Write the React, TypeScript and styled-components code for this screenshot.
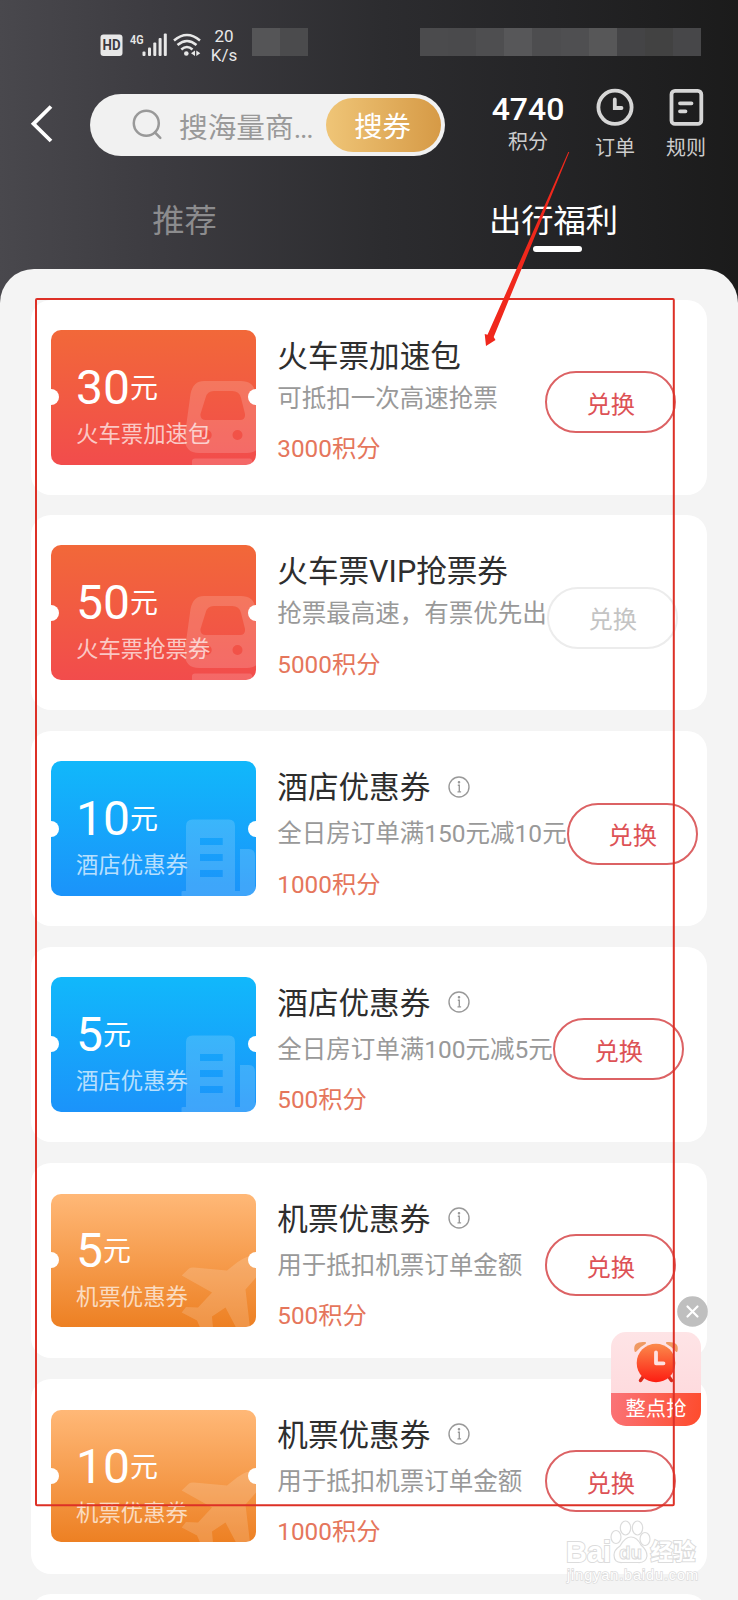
import React from 'react';
import styled, { createGlobalStyle } from 'styled-components';

const GlobalStyle = createGlobalStyle`
  * { box-sizing: border-box; }
  body {
    margin: 0;
    font-family: Roboto, "Noto Sans CJK SC", sans-serif;
    color: #2e2e2e;
  }
`;

const Screen = styled.div`
  position: relative;
  width: 738px;
  height: 1600px;
  overflow: hidden;
  display: flex;
  flex-direction: column;
  background: linear-gradient(90deg, #49484d 0%, #3c3b40 22%, #2c2c2f 52%, #242426 75%, #1b1b1b 100%);
`;

/* ---------- status bar ---------- */

const StatusBar = styled.div`
  flex: none;
  display: flex;
  align-items: flex-start;
  height: 84px;
  padding: 28px 37px 0 100px;
`;

const StatusIcons = styled.svg`
  flex: none;
  display: block;
`;

const NetSpeed = styled.div`
  width: 38px;
  margin: -1px 0 0 1px;
  text-align: center;
  font-size: 17px;
  line-height: 19px;
  color: #e8e8e8;
`;

const Mosaic = styled.div<{ $push?: boolean }>`
  display: flex;
  height: 28px;
  margin-left: ${(p) => (p.$push ? 'auto' : '9px')};
`;

const MosaicBlock = styled.span<{ $tone: string }>`
  width: 28.1px;
  height: 28px;
  background: ${(p) => p.$tone};
`;

/* ---------- header ---------- */

const Header = styled.header`
  flex: none;
  display: flex;
  align-items: flex-start;
  height: 104px;
  padding: 4px 26px 0 29px;
`;

const BackIcon = styled.svg`
  flex: none;
  display: block;
  margin-top: 16px;
`;

const SearchBox = styled.div`
  flex: none;
  display: flex;
  align-items: center;
  width: 355px;
  height: 62px;
  margin: 6px 0 0 37px;
  padding: 0 4px 0 40px;
  border-radius: 31px;
  background: #f1f1f1;
`;

const Placeholder = styled.span`
  flex: 1;
  padding: 5px 0 0 15px;
  font-size: 28.7px;
  line-height: 40px;
  white-space: nowrap;
  color: #999;
`;

const Ellipsis = styled.span`
  letter-spacing: -1.3px;
`;

const SearchButton = styled.button`
  width: 115px;
  height: 54px;
  padding: 6px 2px 0 0;
  border: 0;
  border-radius: 27px;
  background: linear-gradient(90deg, #efc577, #d69a46);
  color: #fff;
  font: 400 28.3px/40px Roboto, "Noto Sans CJK SC", sans-serif;
`;

const HeaderItem = styled.div<{ $width: number; $gap: number }>`
  flex: none;
  display: flex;
  flex-direction: column;
  align-items: center;
  width: ${(p) => p.$width}px;
  margin-left: ${(p) => p.$gap}px;
`;

const PointsValue = styled.strong`
  height: 40px;
  padding-top: 4px;
  font-size: 32px;
  line-height: 34px;
  font-weight: 500;
  color: #fff;
`;

const HeaderLabel = styled.span`
  font-size: 20px;
  line-height: 28px;
  color: #cdcdcd;
`;

const HeaderIcon = styled.svg`
  display: block;
  margin-bottom: 6px;
`;

/* ---------- tabs ---------- */

const Tabs = styled.nav`
  flex: none;
  display: flex;
  height: 81px;
`;

const Tab = styled.div<{ $active?: boolean }>`
  flex: 1;
  display: flex;
  flex-direction: column;
  align-items: center;
  padding-top: 9px;
  font-size: 32.3px;
  line-height: 48px;
  color: ${(p) => (p.$active ? '#fff' : '#8c8c8e')};
`;

const TabMark = styled.span`
  width: 49px;
  height: 6px;
  margin: 1px 0 0 8px;
  border-radius: 3px;
  background: #fff;
`;

/* ---------- list ---------- */

const Panel = styled.main`
  flex: 1;
  min-height: 0;
  overflow: hidden;
  display: flex;
  flex-direction: column;
  gap: 20.8px;
  padding: 30.6px 31px 0;
  border-radius: 34px 34px 0 0;
  background: #f4f4f4;
`;

const Card = styled.section`
  flex: none;
  display: flex;
  height: 195px;
  padding-left: 20px;
  border-radius: 20px;
  background: #fff;
`;

const Ticket = styled.div<{ $from: string; $to: string; $height: number }>`
  position: relative;
  flex: none;
  align-self: center;
  width: 205px;
  height: ${(p) => p.$height}px;
  padding: ${(p) => (p.$height - 135) / 2 + 30}px 0 0 25px;
  border-radius: 10px;
  overflow: hidden;
  background: linear-gradient(180deg, ${(p) => p.$from}, ${(p) => p.$to});
  color: #fff;

  &::before,
  &::after {
    content: '';
    position: absolute;
    top: 50%;
    width: 16px;
    height: 16px;
    margin-top: -8px;
    border-radius: 50%;
    background: #fff;
  }
  &::before { left: -8px; }
  &::after { right: -8px; }
`;

const TicketArt = styled.svg`
  position: absolute;
  left: 0;
  bottom: 0;
`;

const Amount = styled.div`
  position: relative;
  display: flex;
  height: 56px;
  font-size: 48px;
  line-height: 56px;
`;

const Unit = styled.span`
  font-size: 28px;
  line-height: 57px;
`;

const TicketLabel = styled.div`
  position: relative;
  margin-top: 3px;
  font-size: 22.4px;
  line-height: 30px;
  color: rgba(255, 255, 255, 0.7);
`;

const Info = styled.div`
  flex: none;
  min-width: 267.5px;
  margin-left: 21.3px;
  padding-top: 38px;
  white-space: nowrap;
`;

const TitleRow = styled.div<{ $tall: boolean }>`
  display: flex;
  align-items: center;
  height: ${(p) => (p.$tall ? 48 : 44)}px;
  padding-bottom: ${(p) => (p.$tall ? 10 : 6)}px;
  font-size: 30.6px;
  line-height: 38px;
  color: #2e2e2e;
`;

const InfoIcon = styled.svg`
  display: block;
  margin: 0 0 3px 18px;
`;

const Description = styled.div`
  font-size: 24.5px;
  line-height: 34px;
  color: #999;
`;

const Cost = styled.div`
  margin-top: 16.500px;
  font-size: 24.3px;
  line-height: 34px;
  color: #e5765c;
`;

const ExchangeButton = styled.button<{ $disabled?: boolean }>`
  flex: none;
  width: 131px;
  height: 62px;
  margin: 71.5px 0 0 0.5px;
  padding: 5px 0 0;
  border: 2px solid ${(p) => (p.$disabled ? '#ececec' : '#dc6264')};
  border-radius: 31px;
  background: transparent;
  color: ${(p) => (p.$disabled ? '#c4c4c4' : '#dd5256')};
  font: 400 24.3px/34px Roboto, "Noto Sans CJK SC", sans-serif;
`;

/* ---------- floating promo ---------- */

const Promo = styled.aside`
  position: absolute;
  left: 611px;
  top: 1296px;
  width: 96.5px;
  display: flex;
  flex-direction: column;
`;

const PromoClose = styled.svg`
  align-self: flex-end;
  display: block;
`;

const PromoCard = styled.div`
  display: flex;
  flex-direction: column;
  width: 90px;
  height: 94px;
  margin-top: 4.5px;
  border-radius: 15px;
  overflow: hidden;
  background: linear-gradient(180deg, #fee4e6, #fed6da);
`;

const PromoClock = styled.svg`
  flex: 1;
  min-height: 0;
  display: block;
`;

const PromoLabel = styled.div`
  height: 33px;
  padding-top: 1px;
  background: linear-gradient(100deg, #fa7478, #fe4b2c);
  color: #fff;
  font-size: 20.3px;
  line-height: 31px;
  text-align: center;
`;

/* ---------- overlays ---------- */

const Annotation = styled.svg`
  position: absolute;
  left: 0;
  top: 0;
  pointer-events: none;
`;

const Watermark = styled.svg`
  position: absolute;
  left: 560px;
  top: 1514px;
`;

const TrainArt = () => (
  <>
    <path
      fillRule="evenodd"
      d="M153 51 H190 Q202 51 204.500 62 L210 104 Q211 123 196 123 H148 Q132 123 134 104 L139.500 64 Q142 51 153 51Z
         M163 61 Q156 61 154.500 68 L149.500 84 Q149 90 155 90 H189 Q194.500 90 194 84 L190 68 Q188.500 61 181 61Z
         M150.700 105 a5 5 0 1 0 10 0 a5 5 0 1 0 -10 0Z
         M181.500 105 a5 5 0 1 0 10 0 a5 5 0 1 0 -10 0Z"
    />
    <path d="M141 135 V131 Q141 128.500 144 128.500 H199 Q201.500 128.500 202 135Z" />
  </>
);

const HotelArt = () => (
  <path
    fillRule="evenodd"
    d="M130.500 135 V131 Q130.500 130 132 130 H135 V65 Q135 58.500 141.500 58.500 H178 Q184 58.500 184 65 V130 H189 V88 H198 Q204 88 204 95 V130 H205 V135Z
       M149 77 H171.700 V84 H149Z M149 93 H171.700 V100 H149Z M149 109 H171.700 V116 H149Z"
  />
);

const PlaneArt = () => (
  <path
    transform="translate(0 2.500)"
    d="M130.700 81 L138 74 Q140 72.500 143 73 L176 76 L186 68 Q195 61 205 61 V83 L194.500 95 L199 133 H185 L174.500 113 L161 122 L162 133 H149 L146 126 L130.700 118 L135 112.500 L147 113 L161 98Z"
  />
);

type Kind = 'train' | 'hotel' | 'flight';

const kinds: Record<Kind, { from: string; to: string; height: number; Art: () => React.JSX.Element }> = {
  train: { from: '#f26839', to: '#f24c4c', height: 135, Art: TrainArt },
  hotel: { from: '#11b8fb', to: '#1b93fa', height: 135, Art: HotelArt },
  flight: { from: '#ffb877', to: '#ed8023', height: 132.5, Art: PlaneArt },
};

interface Coupon {
  kind: Kind;
  amount: number;
  label: string;
  title: string;
  description: string;
  cost: number;
  soldOut?: boolean;
}

const coupons: Coupon[] = [
  { kind: 'train', amount: 30, label: '火车票加速包', title: '火车票加速包', description: '可抵扣一次高速抢票', cost: 3000 },
  { kind: 'train', amount: 50, label: '火车票抢票券', title: '火车票VIP抢票券', description: '抢票最高速，有票优先出', cost: 5000, soldOut: true },
  { kind: 'hotel', amount: 10, label: '酒店优惠券', title: '酒店优惠券', description: '全日房订单满150元减10元', cost: 1000 },
  { kind: 'hotel', amount: 5, label: '酒店优惠券', title: '酒店优惠券', description: '全日房订单满100元减5元', cost: 500 },
  { kind: 'flight', amount: 5, label: '机票优惠券', title: '机票优惠券', description: '用于抵扣机票订单金额', cost: 500 },
  { kind: 'flight', amount: 10, label: '机票优惠券', title: '机票优惠券', description: '用于抵扣机票订单金额', cost: 1000 },
];

function CouponCard({ coupon }: { coupon: Coupon }) {
  const { from, to, height, Art } = kinds[coupon.kind];
  const hasRules = coupon.kind !== 'train';
  return (
    <Card>
      <Ticket $from={from} $to={to} $height={height}>
        <TicketArt width="205" height="135" viewBox="0 0 205 135" fill="#fff" fillOpacity="0.16">
          <Art />
        </TicketArt>
        <Amount>
          {coupon.amount}
          <Unit>元</Unit>
        </Amount>
        <TicketLabel>{coupon.label}</TicketLabel>
      </Ticket>
      <Info>
        <TitleRow $tall={hasRules}>
          {coupon.title}
          {hasRules && (
            <InfoIcon width="22" height="22" viewBox="0 0 22 22" fill="none" stroke="#999" strokeWidth="1.400">
              <circle cx="11" cy="11" r="10" />
              <path d="M9.800 9.300h1.500v6.500M9.500 15.900h3.600" />
              <circle cx="11" cy="6.200" r="0.600" fill="#999" />
            </InfoIcon>
          )}
        </TitleRow>
        <Description>{coupon.description}</Description>
        <Cost>{coupon.cost}积分</Cost>
      </Info>
      <ExchangeButton $disabled={coupon.soldOut}>兑换</ExchangeButton>
    </Card>
  );
}

const leftMosaic = ['#555557', '#4b4b4d'];
const rightMosaic = ['#4b4b4d', '#4a4a4c', '#4e4e50', '#575759', '#4d4d4f', '#4f4f51', '#575758', '#444446', '#424242', '#474749'];

export default function App() {
  return (
    <>
      <GlobalStyle />
      <Screen>
        <StatusBar>
          <StatusIcons width="104" height="32" viewBox="100 28 104 32" fill="#e8e8e8">
            <rect x="100.500" y="34.500" width="22" height="21.500" rx="3" />
            <text x="111.600" y="50.300" fontSize="14" fontWeight="700" textAnchor="middle" fill="#3b3a3f" textLength="18" lengthAdjust="spacingAndGlyphs">HD</text>
            <text x="130" y="43.700" fontSize="13.500" fontWeight="600" textLength="13.500" lengthAdjust="spacingAndGlyphs">4G</text>
            <rect x="142.500" y="51.500" width="3" height="4.500" rx="1" />
            <rect x="148" y="47.500" width="3" height="8.500" rx="1" />
            <rect x="153.300" y="42.500" width="3" height="13.500" rx="1" />
            <rect x="158.600" y="38" width="3" height="18" rx="1" />
            <rect x="163.800" y="33.500" width="3" height="22.500" rx="1" />
            <g fill="none" stroke="#e8e8e8" strokeWidth="2.500">
              <path d="M174 40.500 Q187 29.500 200 40.500" />
              <path d="M177.500 45 Q187 37 196.500 45" />
              <path d="M181.300 49.500 Q187 44.500 192.500 49.500" />
            </g>
            <circle cx="186.300" cy="53.500" r="2.300" />
            <path d="M195 50.500 v5.500 l-4 -2.750z M196.300 50.500 v5.500 l4 -2.750z" />
          </StatusIcons>
          <NetSpeed>
            20
            <br />
            K/s
          </NetSpeed>
          <Mosaic>
            {leftMosaic.map((tone, i) => (
              <MosaicBlock key={i} $tone={tone} />
            ))}
          </Mosaic>
          <Mosaic $push>
            {rightMosaic.map((tone, i) => (
              <MosaicBlock key={i} $tone={tone} />
            ))}
          </Mosaic>
        </StatusBar>

        <Header>
          <BackIcon width="24" height="40" viewBox="0 0 24 40" fill="none" stroke="#fff" strokeWidth="3.800">
            <path d="M22 2.500 L4.500 19.800 L22 37" />
          </BackIcon>
          <SearchBox>
            <svg width="34" height="34" viewBox="0 0 34 34" fill="none" stroke="#999" strokeWidth="2.500">
              <circle cx="16.300" cy="15.300" r="12.500" />
              <path d="M25 24.500 L30.300 29.800" strokeLinecap="round" />
            </svg>
            <Placeholder>
              搜海量商<Ellipsis>...</Ellipsis>
            </Placeholder>
            <SearchButton>搜券</SearchButton>
          </SearchBox>
          <HeaderItem $width={80} $gap={43}>
            <PointsValue>4740</PointsValue>
            <HeaderLabel>积分</HeaderLabel>
          </HeaderItem>
          <HeaderItem $width={42} $gap={26}>
            <HeaderIcon width="40" height="40" viewBox="0 0 40 40" fill="none" stroke="#d6d6d6" strokeWidth="3.800">
              <circle cx="20" cy="19.300" r="16.600" />
              <path d="M19.800 11.500 V20 H26.500" strokeLinecap="round" />
            </HeaderIcon>
            <HeaderLabel>订单</HeaderLabel>
          </HeaderItem>
          <HeaderItem $width={42} $gap={29}>
            <HeaderIcon width="40" height="40" viewBox="0 0 40 40" fill="none" stroke="#d6d6d6" strokeWidth="3.800">
              <rect x="5.500" y="2.900" width="29.800" height="33" rx="3.500" />
              <path d="M14 15.300 H25.500 M14 23.300 H19.500" strokeLinecap="round" />
            </HeaderIcon>
            <HeaderLabel>规则</HeaderLabel>
          </HeaderItem>
        </Header>

        <Tabs>
          <Tab>推荐</Tab>
          <Tab $active>
            出行福利
            <TabMark />
          </Tab>
        </Tabs>

        <Panel>
          {coupons.map((coupon, i) => (
            <CouponCard key={i} coupon={coupon} />
          ))}
          <Card />
        </Panel>

        <Promo>
          <PromoClose width="31" height="31" viewBox="0 0 31 31">
            <circle cx="15.500" cy="15.500" r="15.300" fill="#bfbfbf" />
            <path d="M10.500 10.500 L20.500 20.500 M20.500 10.500 L10.500 20.500" stroke="#fff" strokeWidth="2.200" strokeLinecap="round" />
          </PromoClose>
          <PromoCard>
            <PromoClock width="90" height="61" viewBox="0 0 90 61">
              <defs>
                <linearGradient id="clockFace" x1="0" y1="0" x2="0" y2="1">
                  <stop offset="0" stopColor="#fb8a4b" />
                  <stop offset="1" stopColor="#fd1d12" />
                </linearGradient>
              </defs>
              <path d="M24.500 19 Q22.500 10 34 11 Q28 14 24.500 19Z M65.500 19 Q67.500 10 56 11 Q62 14 65.500 19Z" fill="#ef9a63" stroke="#ef9a63" strokeWidth="2" strokeLinejoin="round" />
              <path d="M32 45 L29.500 48.500 M58 45 L60.500 48.500" stroke="#d92a1b" strokeWidth="3.500" strokeLinecap="round" />
              <circle cx="45" cy="31" r="19.300" fill="url(#clockFace)" />
              <path d="M45 20.500 V31.300 H52.500" fill="none" stroke="#fee1e0" strokeWidth="3.800" strokeLinecap="round" strokeLinejoin="round" />
            </PromoClock>
            <PromoLabel>整点抢</PromoLabel>
          </PromoCard>
        </Promo>

        <Watermark width="150" height="76" viewBox="560 1514 150 76" fill="#fff" stroke="#dcdcdc" strokeWidth="1.200">
          <g fontFamily='"Liberation Sans", sans-serif' fontWeight="700" paintOrder="stroke">
            <text x="566" y="1562" fontSize="30" strokeWidth="2" textLength="45" lengthAdjust="spacingAndGlyphs">Bai</text>
          </g>
          <ellipse cx="616" cy="1537" rx="5" ry="6.500" />
          <ellipse cx="625.500" cy="1528" rx="5.200" ry="7" />
          <ellipse cx="637.500" cy="1528" rx="5.200" ry="7" />
          <ellipse cx="645" cy="1539" rx="5" ry="6.500" />
          <path d="M631 1537 Q637 1537 641 1545 Q647 1550 647 1556 Q646 1563 638 1562.500 H622 Q614 1563 614 1555 Q614 1550 620 1546 Q625 1537 631 1537Z" />
          <text x="630.500" y="1559" fontSize="19" fontWeight="700" textAnchor="middle" fontFamily='"Liberation Sans", sans-serif' strokeWidth="1">du</text>
          <text x="650.500" y="1559.500" fontSize="22.500" fontWeight="700" strokeWidth="2" paintOrder="stroke" fontFamily='"Noto Sans CJK SC", sans-serif'>经验</text>
          <text x="567" y="1579.500" fontSize="14.500" strokeWidth="1.400" paintOrder="stroke" textLength="131" fontFamily='"Liberation Sans", sans-serif'>jingyan.baidu.com</text>
        </Watermark>

        <Annotation width="738" height="1600" viewBox="0 0 738 1600">
          <rect x="36" y="299" width="637.800" height="1206.200" rx="1" fill="none" stroke="#dd3026" strokeWidth="2" />
          <path d="M569.300 152 L493.700 337 L495.500 340 L486 346 L484.700 334 L487.500 334.800 L568.300 152Z" fill="#f0281c" />
        </Annotation>
      </Screen>
    </>
  );
}
